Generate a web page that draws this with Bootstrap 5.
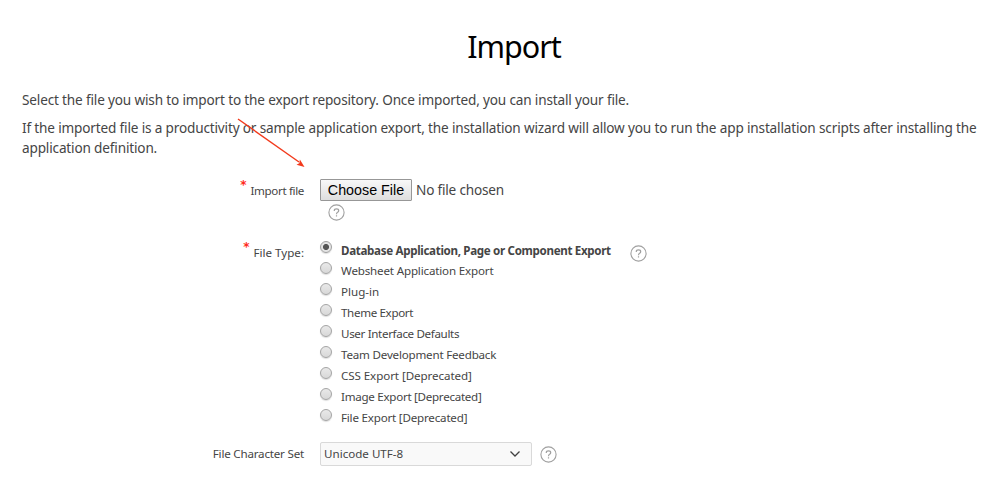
<!DOCTYPE html>
<html lang="en">
<head>
<meta charset="utf-8">
<meta name="viewport" content="width=device-width, initial-scale=1">
<title>Import</title>
<link href="https://cdn.jsdelivr.net/npm/bootstrap@5.3.0/dist/css/bootstrap.min.css" rel="stylesheet">
<style>
body{font-family:"Noto Sans","Open Sans",sans-serif;font-size:13.6px;line-height:20px;color:#454545;background:#fff;height:481px;overflow:hidden}
.wizard{padding:0 14px 0 22px}
.wizard-title{font-size:30.5px;line-height:40px;font-weight:400;letter-spacing:-1px;color:#000;padding:26px 0 0 26px;margin:0 0 24px}
.intro{letter-spacing:-.165px}
.intro p{margin:0 0 8px}
.field-label{width:282px;margin-right:16px;font-size:11.6px;line-height:20px;white-space:nowrap}
.field-label label{padding-top:2px}
.req{color:#ff2a1c;font-family:"DejaVu Sans",sans-serif;font-weight:700;font-size:12px;line-height:13px;margin-right:4px}
.file-row{height:62px;margin-top:21px}
.choose{font:14.3px/20px "Liberation Sans",Arial,sans-serif;width:92px;height:22px;padding:0;color:#000;border:1px solid #979797;border-radius:1px;background:linear-gradient(#f8f8f8,#dedede);white-space:nowrap}
.type-row{height:201px}
.choice{height:21px;font-size:11.6px;line-height:21px;white-space:nowrap}
.choice .t{margin-top:-2px}
.choice.fw-bold .t{margin-top:-1px}
.choice input{appearance:none;width:12px;height:12px;margin:0 9px 0 0;border:1px solid #a4a4a4;border-radius:50%;background:linear-gradient(#e9e9e9,#d8d8d8);box-shadow:0 1px 1px #0002;flex:none}
.choice input:checked{border-color:#a0a0a0;background:radial-gradient(circle,#555 0 2.7px,#e4e4e4 3.3px)}
.charset{width:212px;height:24px;border:1px solid #d9d9d9;border-radius:2px;background:#f9f9f9;padding:0 10px 0 3px;font-size:11.6px;line-height:22px}
.help{width:17px;height:17px;display:block;flex:none}
.file-help{margin:3px 0 0 8px}
.type-help{margin:4px 0 0 19px}
.t{display:inline-block;white-space:nowrap}
#nf{letter-spacing:-.2px}
#l1{letter-spacing:-.36px}
#l3{letter-spacing:-.2px}
#r1{letter-spacing:-.33px}
#r2{letter-spacing:-.17px}
#r6,#r9{letter-spacing:-.2px}
#r4,#r5{letter-spacing:-.34px}
#r7{letter-spacing:-.08px}
#r8{letter-spacing:-.28px}
.pointer{left:230px;top:112px;width:84px;height:62px}
</style>
<script src="https://cdn.jsdelivr.net/npm/bootstrap@5.3.0/dist/js/bootstrap.bundle.min.js"></script>
</head>
<body class="position-relative">
<svg class="d-none"><symbol id="help" viewBox="0 0 17 17"><circle cx="8.5" cy="8.5" r="7.6" fill="#fff" stroke="#a0a0a0" stroke-width="1.1"/><path d="M6.3 7V6.600Q6.300 4.900 8.500 4.900T10.700 6.700Q10.700 7.700 9.600 8.300Q8.500 8.900 8.500 10.200M8.500 11.300V12.500" fill="none" stroke="#a0a0a0" stroke-width="1.200"/></symbol></svg>
<main class="wizard">
<h1 class="wizard-title text-center">Import</h1>
<div class="intro">
<p><span class="t" id="i1">Select the file you wish to import to the export repository. Once imported, you can install your file.</span></p>
<p class="mb-0"><span class="t" id="i2">If the imported file is a productivity or sample application export, the installation wizard will allow you to run the app installation scripts after installing the</span><br><span class="t" id="i3">application definition.</span></p>
</div>
<div class="file-row d-flex">
<div class="field-label d-flex justify-content-end"><span class="req">*</span><label class="t" id="l1">Import file</label></div>
<div>
<div class="d-flex align-items-center"><button class="choose" type="button">Choose File</button><span class="ms-1 t" id="nf">No file chosen</span></div>
<svg class="help file-help"><use href="#help"/></svg>
</div>
</div>
<div class="type-row d-flex">
<div class="field-label d-flex justify-content-end"><span class="req">*</span><label class="t" id="l2">File Type:</label></div>
<div>
<label class="choice d-flex fw-bold"><input type="radio" name="type" checked><span class="t" id="r1">Database Application, Page or Component Export</span></label>
<label class="choice d-flex"><input type="radio" name="type"><span class="t" id="r2">Websheet Application Export</span></label>
<label class="choice d-flex"><input type="radio" name="type"><span class="t" id="r3">Plug-in</span></label>
<label class="choice d-flex"><input type="radio" name="type"><span class="t" id="r4">Theme Export</span></label>
<label class="choice d-flex"><input type="radio" name="type"><span class="t" id="r5">User Interface Defaults</span></label>
<label class="choice d-flex"><input type="radio" name="type"><span class="t" id="r6">Team Development Feedback</span></label>
<label class="choice d-flex"><input type="radio" name="type"><span class="t" id="r7">CSS Export [Deprecated]</span></label>
<label class="choice d-flex"><input type="radio" name="type"><span class="t" id="r8">Image Export [Deprecated]</span></label>
<label class="choice d-flex"><input type="radio" name="type"><span class="t" id="r9">File Export [Deprecated]</span></label>
</div>
<svg class="help type-help"><use href="#help"/></svg>
</div>
<div class="d-flex align-items-center">
<div class="field-label text-end"><span class="t" id="l3">File Character Set</span></div>
<div class="charset d-flex justify-content-between align-items-center"><span class="t" id="cs">Unicode UTF-8</span><svg width="12" height="8" viewBox="0 0 12 8"><path d="M1.500 1.500 6 6l4.500-4.500" fill="none" stroke="#404040" stroke-width="1.300"/></svg></div>
<svg class="help ms-2"><use href="#help"/></svg>
</div>
</main>
<svg class="pointer position-absolute" viewBox="0 0 84 62"><path d="M8 7 69 50" stroke="#f23a1c" stroke-width="1.400"/><path d="m74.500 55-8-2.200 2.800-1.600.6-3.600z" fill="#f23a1c"/></svg>
</body>
</html>
